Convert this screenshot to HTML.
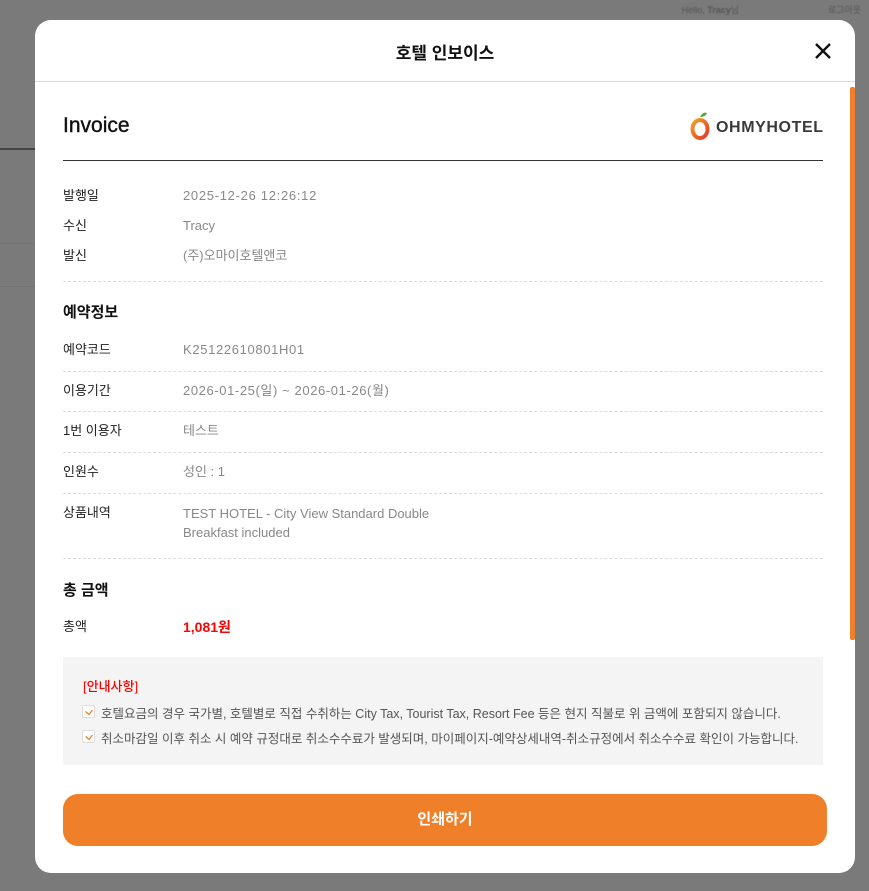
<!DOCTYPE html>
<html><head><meta charset="utf-8"><style>
*{margin:0;padding:0;box-sizing:border-box}
body{width:869px;height:891px;background:#7a7a7a;position:relative;overflow:hidden;font-family:"Liberation Sans","Noto Sans CJK KR",sans-serif;}
.a{position:absolute;white-space:nowrap}
.modal{position:absolute;left:35px;top:20px;width:820px;height:853px;background:#fff;border-radius:16px;overflow:hidden}
.lb{font-size:13px;color:#222;line-height:18px}
.vl{font-size:13px;color:#888;line-height:18px}
.num{letter-spacing:0.65px}
.dash{position:absolute;left:28px;width:760px;border-top:1px dashed #ddd}
.h{font-size:15px;font-weight:bold;color:#111}
</style></head><body>
<div class="a" style="right:130px;top:3px;font-size:9px;color:#555;filter:blur(0.5px)">Hello, <b>Tracy</b>님</div>
<div class="a" style="right:8px;top:3px;font-size:9px;color:#555;filter:blur(0.5px)">로그아웃</div>
<div class="a" style="left:0;top:148px;width:35px;height:2px;background:#444"></div>
<div class="a" style="left:0;top:243px;width:35px;height:1px;background:#727272"></div>
<div class="a" style="left:0;top:286px;width:35px;height:1px;background:#727272"></div>

<div class="modal">
  <div class="a" style="left:0;top:0;width:820px;height:62px;border-bottom:1px solid #ddd"></div>
  <div class="a" style="left:0;width:820px;top:19px;text-align:center;font-size:17px;font-weight:bold;color:#111">호텔 인보이스</div>
  <svg class="a" style="left:779px;top:22px" width="18" height="18" viewBox="0 0 18 18"><path d="M2 2L16 16M16 2L2 16" stroke="#111" stroke-width="2.4"/></svg>
  <div class="a" style="left:815px;top:67px;width:5px;height:553px;background:#ef8029;border-radius:2px"></div>

  <div class="a" style="left:28px;top:94px;font-size:21px;color:#111;-webkit-text-stroke:0.4px #111">Invoice</div>
  <svg class="a" style="left:652px;top:87px" width="26" height="36" viewBox="0 0 26 36"><defs><linearGradient id="g" x1="0" y1="0" x2="1" y2="1"><stop offset="0" stop-color="#f4a020"/><stop offset="1" stop-color="#e03a2a"/></linearGradient></defs><path d="M13 10c2-4 5-5 7-4-1 3-4 4-7 4z" fill="#5aa83a"/><ellipse cx="13" cy="22" rx="7.5" ry="9" fill="none" stroke="url(#g)" stroke-width="4"/></svg>
  <div class="a" style="left:681px;top:99px;font-size:16px;font-weight:900;color:#3a3a3a;letter-spacing:0.6px">OHMYHOTEL</div>
  <div class="a" style="left:28px;top:140px;width:760px;height:1px;background:#333"></div>

  <div class="a lb" style="left:28px;top:167px">발행일</div><div class="a vl num" style="left:148px;top:167px;letter-spacing:0.7px">2025-12-26 12:26:12</div>
  <div class="a lb" style="left:28px;top:197px">수신</div><div class="a vl" style="left:148px;top:197px">Tracy</div>
  <div class="a lb" style="left:28px;top:227px">발신</div><div class="a vl" style="left:148px;top:227px">(주)오마이호텔앤코</div>
  <div class="dash" style="top:261px"></div>

  <div class="a h" style="left:28px;top:281px">예약정보</div>
  <div class="a lb" style="left:28px;top:321px">예약코드</div><div class="a vl num" style="left:148px;top:321px">K25122610801H01</div>
  <div class="dash" style="top:351px"></div>
  <div class="a lb" style="left:28px;top:362px">이용기간</div><div class="a vl num" style="left:148px;top:362px;letter-spacing:0.6px">2026-01-25(일) ~ 2026-01-26(월)</div>
  <div class="dash" style="top:391px"></div>
  <div class="a lb" style="left:28px;top:402px">1번 이용자</div><div class="a vl" style="left:148px;top:402px">테스트</div>
  <div class="dash" style="top:432px"></div>
  <div class="a lb" style="left:28px;top:443px">인원수</div><div class="a vl" style="left:148px;top:443px">성인 : 1</div>
  <div class="dash" style="top:473px"></div>
  <div class="a lb" style="left:28px;top:484px">상품내역</div><div class="a vl" style="left:148px;top:484px;line-height:19px">TEST HOTEL - City View Standard Double<br>Breakfast included</div>
  <div class="dash" style="top:538px"></div>

  <div class="a h" style="left:28px;top:559px">총 금액</div>
  <div class="a lb" style="left:28px;top:598px">총액</div><div class="a" style="left:148px;top:597px;font-size:14px;font-weight:bold;color:#f00;line-height:20px">1,081원</div>

  <div class="a" style="left:28px;top:637px;width:760px;height:108px;background:#f4f4f4"></div>
  <div class="a" style="left:48px;top:656px;font-size:13px;color:#f00;font-weight:500">[안내사항]</div>
  <div class="a" style="left:47px;top:685px;width:13px;height:13px;border:1px solid #ddd;background:#fff;border-radius:2px"></div>
  <svg class="a" style="left:49px;top:688px" width="10" height="8" viewBox="0 0 10 8"><path d="M1.5 3.5L5 6.5 8.5 2" stroke="#ef8029" stroke-width="1.3" fill="none"/></svg>
  <div class="a" style="left:66px;top:683px;font-size:12.5px;color:#555">호텔요금의 경우 국가별, 호텔별로 직접 수취하는 City Tax, Tourist Tax, Resort Fee 등은 현지 직불로 위 금액에 포함되지 않습니다.</div>
  <div class="a" style="left:47px;top:710px;width:13px;height:13px;border:1px solid #ddd;background:#fff;border-radius:2px"></div>
  <svg class="a" style="left:49px;top:713px" width="10" height="8" viewBox="0 0 10 8"><path d="M1.5 3.5L5 6.5 8.5 2" stroke="#ef8029" stroke-width="1.3" fill="none"/></svg>
  <div class="a" style="left:66px;top:708px;font-size:12.5px;color:#555">취소마감일 이후 취소 시 예약 규정대로 취소수수료가 발생되며, 마이페이지-예약상세내역-취소규정에서 취소수수료 확인이 가능합니다.</div>

  <div class="a" style="left:28px;top:774px;width:764px;height:52px;background:#ef8029;border-radius:15px;color:#fff;font-size:15px;font-weight:bold;text-align:center;line-height:52px">인쇄하기</div>
</div>
</body></html>
